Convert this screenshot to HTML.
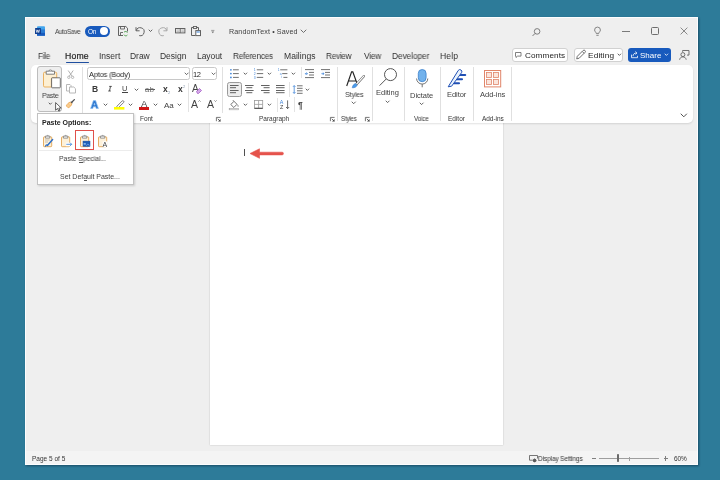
<!DOCTYPE html>
<html><head><meta charset="utf-8">
<style>
*{margin:0;padding:0;box-sizing:border-box}
html,body{width:720px;height:480px;overflow:hidden;background:#2d7b99;font-family:"Liberation Sans",sans-serif;color:#242424}
.a{position:absolute}
.t{position:absolute;white-space:nowrap;line-height:1;will-change:transform}
svg{position:absolute;overflow:visible}
</style></head><body>
<div class="a" style="left:24.70px;top:16.70px;width:673.50px;height:447.90px;background:#efefef;border:1px solid #fcfdfe;box-shadow:0.5px 0.5px 2px rgba(0,20,40,.45)"></div>
<svg style="left:35.00px;top:26.00px" width="10" height="10" viewBox="0 0 10 10" ><rect x="2" y="0.2" width="8" height="9.6" rx="1" fill="#41a5ee"/>
<rect x="2" y="3.4" width="8" height="3.2" fill="#2b7cd3"/><rect x="2" y="6.6" width="8" height="3.2" rx="0" fill="#185abd"/>
<rect x="0" y="2" width="6" height="6" rx="0.6" fill="#103f91"/>
<path d="M1 3.6l0.9 2.9 0.9-2.6 0.9 2.6 0.9-2.9" fill="none" stroke="#fff" stroke-width="0.7"/></svg>
<div class="t" style="left:54.88px;top:28px;font-size:7px;color:#424242;letter-spacing:-0.345px;transform:scaleX(0.9197);transform-origin:0 0">AutoSave</div>
<div class="a" style="left:84.50px;top:25.50px;width:25.50px;height:11.50px;background:#185abd;border-radius:6px"></div>
<div class="a" style="left:100.20px;top:27.30px;width:8.00px;height:8.00px;background:#fff;border-radius:50%"></div>
<div class="t" style="left:88.31px;top:29px;font-size:6.5px;color:#ffffff;letter-spacing:-0.374px;transform:scaleX(0.9529);transform-origin:0 0">On</div>
<svg style="left:118.00px;top:26.00px" width="10" height="10" viewBox="0 0 10 10" ><path d="M0.5 0.5h7.3l1.7 1.7v3.3M0.5 0.5v9h4.5" fill="none" stroke="#616161" stroke-width="1"/>
<path d="M2.5 0.5v2.5h4v-2.5M2.5 9.5v-3h2.5" fill="none" stroke="#616161" stroke-width="0.9"/>
<path d="M6 6.3a2 2 0 0 1 3.4 0.3M9.4 9a2 2 0 0 1-3.4-0.3" fill="none" stroke="#3f9b3f" stroke-width="0.9"/></svg>
<svg style="left:135.00px;top:26.00px" width="10" height="10" viewBox="0 0 10 10" ><path d="M1 1.2v3.6h3.6" fill="none" stroke="#616161" stroke-width="1"/><path d="M1.3 4.6A4 4 0 1 1 4.2 9.6" fill="none" stroke="#616161" stroke-width="1"/></svg>
<svg style="left:147.70px;top:29.45px" width="5" height="3.5" viewBox="0 0 5 3.5" ><path d="M1 1l1.50 1.50 1.50 -1.50" fill="none" stroke="#505050" stroke-width="0.9" stroke-linecap="round" stroke-linejoin="round"/></svg>
<svg style="left:157.80px;top:26.00px" width="10" height="10" viewBox="0 0 10 10" ><path d="M9 1.2v3.6h-3.6" fill="none" stroke="#a8a8a8" stroke-width="1"/><path d="M8.7 4.6A4 4 0 1 0 5.8 9.6" fill="none" stroke="#a8a8a8" stroke-width="1"/></svg>
<svg style="left:174.60px;top:28.40px" width="10.4" height="5.4" viewBox="0 0 10.4 5.4" ><rect x="0.5" y="0.5" width="9.4" height="4.4" fill="none" stroke="#616161" stroke-width="1"/><path d="M5.2 0.5v4.4" stroke="#616161" stroke-width="1"/><path d="M1.5 2h2.5M6.4 2h2.5M1.5 3.4h2.5M6.4 3.4h2.5" stroke="#999" stroke-width="0.6"/></svg>
<svg style="left:191.00px;top:26.00px" width="10" height="10" viewBox="0 0 10 10" ><path d="M2.6 1.5H0.5v8h4M5.4 1.5h2.1v2.5" fill="none" stroke="#616161" stroke-width="1"/><rect x="2.4" y="0.5" width="3.2" height="2" fill="none" stroke="#616161" stroke-width="0.9"/><rect x="4.8" y="4.6" width="4.7" height="5" fill="#fff" stroke="#616161" stroke-width="1"/><path d="M5.5 6h3.3" stroke="#3b82d8" stroke-width="1"/></svg>
<svg style="left:211.00px;top:30.00px" width="3.6" height="3.4" viewBox="0 0 3.6 3.4" ><path d="M0.2 0.4h3.2" stroke="#777" stroke-width="0.7"/><path d="M0.4 1.4h2.8L1.8 3.2z" fill="#777"/></svg>
<div class="t" style="left:229.41px;top:28px;font-size:7px;color:#424242;letter-spacing:0.088px;transform:scaleX(1.0232);transform-origin:0 0">RandomText • Saved</div>
<svg style="left:299.50px;top:29.25px" width="7" height="4.5" viewBox="0 0 7 4.5" ><path d="M1 1l2.50 2.50 2.50 -2.50" fill="none" stroke="#616161" stroke-width="0.9" stroke-linecap="round" stroke-linejoin="round"/></svg>
<svg style="left:531.50px;top:27.50px" width="8.5" height="8.5" viewBox="0 0 8.5 8.5" ><circle cx="5.1" cy="3.4" r="2.8" fill="none" stroke="#6a6a6a" stroke-width="0.85"/><path d="M3.1 5.4L0.6 7.9" stroke="#6a6a6a" stroke-width="0.95"/></svg>
<svg style="left:594.00px;top:27.00px" width="7" height="9.4" viewBox="0 0 7 9.4" ><path d="M2.2 6.4C2 5.1 0.6 4.5 0.6 3a2.9 2.9 0 0 1 5.8 0c0 1.5-1.4 2.1-1.6 3.4z" fill="none" stroke="#6a6a6a" stroke-width="0.8"/><path d="M2.3 8.3h2.4" stroke="#6a6a6a" stroke-width="0.8"/></svg>
<div class="a" style="left:622.00px;top:31.20px;width:8.00px;height:0.80px;background:#7a7a7a"></div>
<div class="a" style="left:651.20px;top:27.20px;width:7.60px;height:7.60px;border:0.9px solid #6e6e6e;border-radius:1.5px"></div>
<svg style="left:680.00px;top:27.00px" width="8" height="8" viewBox="0 0 8 8" ><path d="M0.6 0.6l6.8 6.8M7.4 0.6l-6.8 6.8" stroke="#6e6e6e" stroke-width="0.8"/></svg>
<div class="t" style="left:38.09px;top:52px;font-size:8.5px;color:#333333;letter-spacing:-0.235px;transform:scaleX(0.9441);transform-origin:0 0">File</div>
<div class="t" style="left:98.71px;top:52px;font-size:8.5px;color:#333333;letter-spacing:0.010px">Insert</div>
<div class="t" style="left:130.30px;top:52px;font-size:8.5px;color:#333333;letter-spacing:-0.028px">Draw</div>
<div class="t" style="left:160.30px;top:52px;font-size:8.5px;color:#333333;letter-spacing:-0.020px">Design</div>
<div class="t" style="left:196.81px;top:52px;font-size:8.5px;color:#333333;letter-spacing:-0.076px;transform:scaleX(0.9846);transform-origin:0 0">Layout</div>
<div class="t" style="left:233.08px;top:52px;font-size:8.5px;color:#333333;letter-spacing:-0.183px;transform:scaleX(0.9612);transform-origin:0 0">References</div>
<div class="t" style="left:283.79px;top:52px;font-size:8.5px;color:#333333;letter-spacing:0.023px;transform:scaleX(1.0054);transform-origin:0 0">Mailings</div>
<div class="t" style="left:326.33px;top:52px;font-size:8.5px;color:#333333;letter-spacing:-0.225px;transform:scaleX(0.9587);transform-origin:0 0">Review</div>
<div class="t" style="left:363.71px;top:52px;font-size:8.5px;color:#333333;letter-spacing:-0.170px;transform:scaleX(0.9721);transform-origin:0 0">View</div>
<div class="t" style="left:391.81px;top:52px;font-size:8.5px;color:#333333;letter-spacing:-0.089px;transform:scaleX(0.9812);transform-origin:0 0">Developer</div>
<div class="t" style="left:440.29px;top:52px;font-size:8.5px;color:#333333;letter-spacing:0.095px;transform:scaleX(1.0173);transform-origin:0 0">Help</div>
<div class="t" style="left:65.18px;top:52px;font-size:8.5px;color:#242424;letter-spacing:0.147px;transform:scaleX(1.0204);transform-origin:0 0;-webkit-text-stroke:0.2px #242424">Home</div>
<div class="a" style="left:66.00px;top:61.50px;width:22.50px;height:1.50px;background:#1f4fa0;border-radius:1px"></div>
<div class="a" style="left:512.30px;top:48.20px;width:55.40px;height:14.00px;background:#fff;border:1px solid #d1d1d1;border-radius:3px"></div>
<svg style="left:515.30px;top:52.00px" width="6.5" height="6" viewBox="0 0 6.5 6" ><path d="M0.5 0.5h5.5v3.6H2.6L1 5.5V4.1H0.5z" fill="none" stroke="#616161" stroke-width="0.8" stroke-linejoin="round"/></svg>
<div class="t" style="left:524.59px;top:52px;font-size:8px;color:#242424;letter-spacing:0.099px;transform:scaleX(1.0183);transform-origin:0 0">Comments</div>
<div class="a" style="left:573.50px;top:48.20px;width:49.20px;height:14.00px;background:#fff;border:1px solid #d1d1d1;border-radius:3px"></div>
<svg style="left:575.80px;top:50.20px" width="10" height="9.6" viewBox="0 0 10 9.6" ><path d="M0.7 8.9l0.6-2.6 5.8-5.8a1.3 1.3 0 0 1 1.9 1.9L3.2 8.2z M6.3 1.5l1.8 1.8" fill="none" stroke="#616161" stroke-width="0.9" stroke-linejoin="round"/></svg>
<div class="t" style="left:587.62px;top:52px;font-size:8px;color:#242424;letter-spacing:0.131px;transform:scaleX(1.0338);transform-origin:0 0">Editing</div>
<svg style="left:616.80px;top:53.30px" width="4.8" height="3.4" viewBox="0 0 4.8 3.4" ><path d="M1 1l1.40 1.40 1.40 -1.40" fill="none" stroke="#505050" stroke-width="0.9" stroke-linecap="round" stroke-linejoin="round"/></svg>
<div class="a" style="left:628.00px;top:48.20px;width:42.50px;height:13.80px;background:#185abd;border-radius:3px"></div>
<svg style="left:630.50px;top:51.00px" width="7" height="7.2" viewBox="0 0 7 7.2" ><path d="M0.5 3.6v3.1h6V4.8" fill="none" stroke="#fff" stroke-width="0.8"/><path d="M2 5.2c0-2.1 1.5-3.2 3.6-3.2M4.4 0.6l1.5 1.4-1.4 1.5" fill="none" stroke="#fff" stroke-width="0.8"/></svg>
<div class="t" style="left:639.94px;top:52px;font-size:8px;color:#ffffff;letter-spacing:0.007px">Share</div>
<svg style="left:664.10px;top:53.30px" width="4.8" height="3.4" viewBox="0 0 4.8 3.4" ><path d="M1 1l1.40 1.40 1.40 -1.40" fill="none" stroke="#ffffff" stroke-width="0.8" stroke-linecap="round" stroke-linejoin="round"/></svg>
<svg style="left:679.00px;top:50.00px" width="11" height="10.2" viewBox="0 0 11 10.2" ><circle cx="3.9" cy="4.6" r="2" fill="none" stroke="#616161" stroke-width="0.9"/><path d="M0.6 9.7c0.5-2 1.5-2.8 3.3-2.8s2.8 0.8 3.3 2.8" fill="none" stroke="#616161" stroke-width="0.9"/><path d="M3.6 1.8V0.5h6.4v4.6H8" fill="none" stroke="#616161" stroke-width="0.9"/></svg>
<div class="a" style="left:210.00px;top:120.00px;width:293.00px;height:325.00px;background:#fff;box-shadow:0 0 1.5px rgba(0,0,0,.22)"></div>
<div class="a" style="left:244.00px;top:149.00px;width:1.00px;height:7.00px;background:#505050"></div>
<svg style="left:248.50px;top:147.50px" width="36" height="11" viewBox="0 0 36 11" ><path d="M1 5.5L10.5 0.8v3.4h22.6a1.35 1.35 0 0 1 0 2.7H10.5v3.4z" fill="#e5534b" stroke="#e5534b" stroke-width="0.6" stroke-linejoin="round"/></svg>
<div class="a" style="left:30.50px;top:65.00px;width:662.50px;height:58.30px;background:#fff;border-radius:5px;box-shadow:0 1px 2px rgba(0,0,0,.12)"></div>
<div class="a" style="left:37.00px;top:66.30px;width:25.40px;height:45.90px;background:#efefef;border:1px solid #bdbdbd;border-radius:3px"></div>
<svg style="left:42.50px;top:69.50px" width="18" height="18.5" viewBox="0 0 18 18.5" ><path d="M3.2 2.2H1.8a1.3 1.3 0 0 0-1.3 1.3v12.2a1.3 1.3 0 0 0 1.3 1.3h6.6V9.2a1.3 1.3 0 0 1 1.3-1.3h4V3.5a1.3 1.3 0 0 0-1.3-1.3h-1.4" fill="#fdefd2" stroke="#e7a548" stroke-width="0.85"/>
<path d="M3.2 1.2h8.3v3h-8.3z" fill="#fff" stroke="#707070" stroke-width="0.9"/>
<path d="M5.5 1.2a1.9 1.5 0 0 1 3.7 0" fill="#fff" stroke="#707070" stroke-width="0.9"/>
<rect x="8.6" y="7.8" width="8.7" height="10" rx="0.6" fill="#fff" stroke="#5a5a5a" stroke-width="0.85"/></svg>
<div class="t" style="left:41.53px;top:92px;font-size:7.5px;color:#424242;letter-spacing:-0.341px;transform:scaleX(0.9252);transform-origin:0 0">Paste</div>
<svg style="left:47.50px;top:102.15px" width="4.6" height="3.3" viewBox="0 0 4.6 3.3" ><path d="M1 1l1.30 1.30 1.30 -1.30" fill="none" stroke="#505050" stroke-width="0.9" stroke-linecap="round" stroke-linejoin="round"/></svg>
<svg style="left:54.80px;top:101.80px" width="6.5" height="9.4" viewBox="0 0 6.5 9.4" ><path d="M0.6 0.6v7.6l1.9-1.7 1.3 2.6 1.2-0.6-1.2-2.5h2.4z" fill="#fff" stroke="#222" stroke-width="0.7" stroke-linejoin="round"/></svg>
<svg style="left:66.80px;top:69.70px" width="7.4" height="9" viewBox="0 0 7.4 9" ><path d="M1.2 0.5l4 5.8M6.2 0.5l-4 5.8" stroke="#a8a8a8" stroke-width="0.9" fill="none"/><circle cx="1.8" cy="7.3" r="1.2" fill="none" stroke="#a8a8a8" stroke-width="0.8"/><circle cx="5.6" cy="7.3" r="1.2" fill="none" stroke="#a8a8a8" stroke-width="0.8"/></svg>
<svg style="left:65.80px;top:84.30px" width="10" height="9.5" viewBox="0 0 10 9.5" ><path d="M0.5 0.5h3.5l1 1v5.5h-4.5z" fill="#fff" stroke="#b0b0b0" stroke-width="0.9"/><path d="M3.5 3h4.3l1.7 1.7v4.3h-6z" fill="#fff" stroke="#b0b0b0" stroke-width="0.9"/></svg>
<svg style="left:66.20px;top:99.40px" width="9" height="9" viewBox="0 0 9 9" ><path d="M6.2 2.8L8.4 0.6" stroke="#505050" stroke-width="1.3" stroke-linecap="round"/><path d="M5.2 2.2l1.6 1.6-0.9 0.9-1.6-1.6z" fill="#505050"/><path d="M4.1 3.2l1.7 1.7c-0.4 1.6-1.8 3.3-3.6 3.9L0.3 6.9C1 5.1 2.5 3.6 4.1 3.2z" fill="#fbd39a" stroke="#e89a3c" stroke-width="0.7" stroke-linejoin="round"/><path d="M1.8 6.6l1.6-1.6M2.8 7.5l1.4-1.4" stroke="#e89a3c" stroke-width="0.4"/></svg>
<div class="a" style="left:82.00px;top:67.00px;width:1.00px;height:46.00px;background:#e0e0e0"></div>
<div class="a" style="left:87.30px;top:67.10px;width:102.90px;height:13.40px;background:#fff;border:1px solid #c8c8c8;border-radius:2.5px"></div>
<div class="t" style="left:88.98px;top:71px;font-size:7.5px;color:#242424;letter-spacing:-0.095px;transform:scaleX(0.9756);transform-origin:0 0">Aptos (Body)</div>
<svg style="left:184.10px;top:72.00px" width="5.2" height="3.6" viewBox="0 0 5.2 3.6" ><path d="M1 1l1.60 1.60 1.60 -1.60" fill="none" stroke="#424242" stroke-width="0.8" stroke-linecap="round" stroke-linejoin="round"/></svg>
<div class="a" style="left:191.90px;top:67.10px;width:25.10px;height:13.40px;background:#fff;border:1px solid #c8c8c8;border-radius:2.5px"></div>
<div class="t" style="left:192.96px;top:71px;font-size:7.5px;color:#242424;letter-spacing:-0.326px;transform:scaleX(0.9559);transform-origin:0 0">12</div>
<svg style="left:211.20px;top:72.00px" width="5.2" height="3.6" viewBox="0 0 5.2 3.6" ><path d="M1 1l1.60 1.60 1.60 -1.60" fill="none" stroke="#424242" stroke-width="0.8" stroke-linecap="round" stroke-linejoin="round"/></svg>
<div class="t" style="left:91.83px;top:85px;font-size:8.5px;color:#3a3a3a;font-weight:bold">B</div>
<svg style="left:108.00px;top:86.30px" width="4" height="5.4" viewBox="0 0 4 5.4" ><path d="M1.2 0.4h2.6M0.2 5h2.6M2.5 0.4L1.5 5" fill="none" stroke="#424242" stroke-width="0.9"/></svg>
<div class="t" style="left:121.82px;top:85px;font-size:7.5px;color:#424242">U</div>
<div class="a" style="left:122.20px;top:92.00px;width:5.70px;height:0.80px;background:#424242"></div>
<svg style="left:134.10px;top:87.65px" width="5" height="3.5" viewBox="0 0 5 3.5" ><path d="M1 1l1.50 1.50 1.50 -1.50" fill="none" stroke="#505050" stroke-width="0.9" stroke-linecap="round" stroke-linejoin="round"/></svg>
<div class="t" style="left:145.48px;top:86px;font-size:7px;color:#616161;letter-spacing:0.580px;transform:scaleX(1.0807);transform-origin:0 0">ab</div>
<div class="a" style="left:145.00px;top:88.80px;width:10.00px;height:0.80px;background:#616161"></div>
<div class="t" style="left:162.94px;top:85px;font-size:8.5px;color:#333333;font-weight:bold">x</div>
<div class="t" style="left:168.20px;top:91px;font-size:4px;color:#8a9ab0">2</div>
<div class="t" style="left:177.94px;top:85px;font-size:8.5px;color:#333333;font-weight:bold">x</div>
<div class="t" style="left:183.20px;top:85px;font-size:4px;color:#8a9ab0">2</div>
<div class="a" style="left:188.00px;top:82.75px;width:1.00px;height:28.75px;background:#e3e3e3"></div>
<div class="t" style="left:192.47px;top:84px;font-size:10px;color:#424242">A</div>
<svg style="left:196.20px;top:88.00px" width="6" height="6" viewBox="0 0 6 6" ><path d="M0.5 3.5l3-3 2 2-3 3h-1z" fill="#d4a8e8" stroke="#a65cc8" stroke-width="0.8"/></svg>
<svg style="left:90.20px;top:99.80px" width="9" height="9" viewBox="0 0 9 9" ><path d="M0.6 8.5L3.4 0.5h2.2l2.8 8h-2.2l-0.55-1.7H3.35L2.8 8.5z M3.95 5h1.1L4.5 3.1z" fill="#2f78d0" stroke="#8cc0f0" stroke-width="0.7" fill-rule="evenodd" stroke-linejoin="round"/></svg>
<svg style="left:102.70px;top:102.55px" width="5" height="3.5" viewBox="0 0 5 3.5" ><path d="M1 1l1.50 1.50 1.50 -1.50" fill="none" stroke="#505050" stroke-width="0.9" stroke-linecap="round" stroke-linejoin="round"/></svg>
<svg style="left:114.40px;top:99.80px" width="10.6" height="9.6" viewBox="0 0 10.6 9.6" ><path d="M3 6.2L8.1 1a1 1 0 0 1 1.5 1.5L4.5 7.6l-2 0.5z" fill="#fff" stroke="#616161" stroke-width="0.8" stroke-linejoin="round"/><rect x="0" y="7" width="10.4" height="2.6" fill="#ffff00"/></svg>
<svg style="left:128.10px;top:102.55px" width="5" height="3.5" viewBox="0 0 5 3.5" ><path d="M1 1l1.50 1.50 1.50 -1.50" fill="none" stroke="#505050" stroke-width="0.9" stroke-linecap="round" stroke-linejoin="round"/></svg>
<div class="t" style="left:140.58px;top:99px;font-size:9.5px;color:#424242">A</div>
<div class="a" style="left:138.70px;top:107.20px;width:10.40px;height:2.60px;background:#d01818"></div>
<svg style="left:152.50px;top:102.55px" width="5" height="3.5" viewBox="0 0 5 3.5" ><path d="M1 1l1.50 1.50 1.50 -1.50" fill="none" stroke="#505050" stroke-width="0.9" stroke-linecap="round" stroke-linejoin="round"/></svg>
<div class="t" style="left:163.98px;top:102px;font-size:8px;color:#424242">Aa</div>
<svg style="left:176.50px;top:102.55px" width="5" height="3.5" viewBox="0 0 5 3.5" ><path d="M1 1l1.50 1.50 1.50 -1.50" fill="none" stroke="#505050" stroke-width="0.9" stroke-linecap="round" stroke-linejoin="round"/></svg>
<div class="t" style="left:190.97px;top:99px;font-size:10.5px;color:#424242">A</div>
<svg style="left:198.20px;top:99.60px" width="3" height="2" viewBox="0 0 3 2" ><path d="M0.4 1.6l1.1-1.1 1.1 1.1" fill="none" stroke="#616161" stroke-width="0.7"/></svg>
<div class="t" style="left:206.87px;top:99px;font-size:10.5px;color:#424242">A</div>
<svg style="left:214.00px;top:99.60px" width="3" height="2" viewBox="0 0 3 2" ><path d="M0.4 0.4l1.1 1.1 1.1-1.1" fill="none" stroke="#616161" stroke-width="0.7"/></svg>
<div class="t" style="left:140.47px;top:116px;font-size:6.5px;color:#363636;letter-spacing:-0.070px;transform:scaleX(0.9831);transform-origin:0 0">Font</div>
<svg style="left:215.50px;top:116.50px" width="4.6" height="4.4" viewBox="0 0 4.6 4.4" ><path d="M0.4 4.2V0.4h4.2" fill="none" stroke="#555" stroke-width="0.8"/><path d="M1.8 1.8l2.4 2.4" stroke="#444" stroke-width="0.8"/><path d="M4.6 2v2.6H2z" fill="#444"/></svg>
<div class="a" style="left:222.00px;top:67.00px;width:1.00px;height:46.00px;background:#e0e0e0"></div>
<svg style="left:229.75px;top:69.20px" width="9.6" height="9" viewBox="0 0 9.6 9" ><circle cx="0.9" cy="0.80" r="0.85" fill="#3b82d8"/><path d="M3 0.80h5.8" stroke="#616161" stroke-width="0.9"/><circle cx="0.9" cy="4.60" r="0.85" fill="#3b82d8"/><path d="M3 4.60h5.8" stroke="#616161" stroke-width="0.9"/><circle cx="0.9" cy="8.40" r="0.85" fill="#3b82d8"/><path d="M3 8.40h5.8" stroke="#616161" stroke-width="0.9"/></svg>
<svg style="left:243.20px;top:72.10px" width="4.8" height="3.4" viewBox="0 0 4.8 3.4" ><path d="M1 1l1.40 1.40 1.40 -1.40" fill="none" stroke="#505050" stroke-width="0.9" stroke-linecap="round" stroke-linejoin="round"/></svg>
<svg style="left:253.90px;top:69.20px" width="9.6" height="9" viewBox="0 0 9.6 9" ><text x="-0.2" y="2.00" font-size="3.4" fill="#3b82d8" font-family="Liberation Sans">1</text><path d="M2.8 0.80h6.4" stroke="#616161" stroke-width="0.9"/><text x="-0.2" y="5.80" font-size="3.4" fill="#3b82d8" font-family="Liberation Sans">2</text><path d="M2.8 4.60h6.4" stroke="#616161" stroke-width="0.9"/><text x="-0.2" y="9.60" font-size="3.4" fill="#3b82d8" font-family="Liberation Sans">3</text><path d="M2.8 8.40h6.4" stroke="#616161" stroke-width="0.9"/></svg>
<svg style="left:267.40px;top:72.10px" width="4.8" height="3.4" viewBox="0 0 4.8 3.4" ><path d="M1 1l1.40 1.40 1.40 -1.40" fill="none" stroke="#505050" stroke-width="0.9" stroke-linecap="round" stroke-linejoin="round"/></svg>
<svg style="left:278.00px;top:69.20px" width="9.6" height="9" viewBox="0 0 9.6 9" ><text x="-0.20" y="1.90" font-size="3.2" fill="#3b82d8" font-family="Liberation Sans">1</text><path d="M2.20 0.80h7.20" stroke="#616161" stroke-width="0.9"/><text x="1.80" y="5.70" font-size="3.2" fill="#3b82d8" font-family="Liberation Sans">a</text><path d="M4.20 4.60h5.20" stroke="#616161" stroke-width="0.9"/><text x="3.00" y="9.50" font-size="3.2" fill="#3b82d8" font-family="Liberation Sans">i</text><path d="M5.40 8.40h4.00" stroke="#616161" stroke-width="0.9"/></svg>
<svg style="left:291.10px;top:72.10px" width="4.8" height="3.4" viewBox="0 0 4.8 3.4" ><path d="M1 1l1.40 1.40 1.40 -1.40" fill="none" stroke="#505050" stroke-width="0.9" stroke-linecap="round" stroke-linejoin="round"/></svg>
<div class="a" style="left:301.00px;top:66.50px;width:1.00px;height:11.50px;background:#e3e3e3"></div>
<svg style="left:305.00px;top:69.20px" width="9" height="9" viewBox="0 0 9 9" ><path d="M0 0.6h9M4 3.4h5M4 6h5M0 8.6h9" stroke="#616161" stroke-width="0.9"/><path d="M3 4.7H0.4M1.6 3.5L0.4 4.7l1.2 1.2" fill="none" stroke="#3b82d8" stroke-width="0.8"/></svg>
<svg style="left:320.50px;top:69.20px" width="9" height="9" viewBox="0 0 9 9" ><path d="M0 0.6h9M4 3.4h5M4 6h5M0 8.6h9" stroke="#616161" stroke-width="0.9"/><path d="M0.4 4.7H3M1.8 3.5L3 4.7 1.8 5.9" fill="none" stroke="#3b82d8" stroke-width="0.8"/></svg>
<div class="a" style="left:227.20px;top:82.30px;width:14.50px;height:14.30px;background:#ededed;border:1px solid #9a9a9a;border-radius:2.5px"></div>
<svg style="left:230.00px;top:84.80px" width="9" height="8.5" viewBox="0 0 9 8.5" ><path d="M0.00 0.50h8.60" stroke="#505050" stroke-width="0.9"/><path d="M0.00 2.70h6.00" stroke="#505050" stroke-width="0.9"/><path d="M0.00 5.50h8.60" stroke="#505050" stroke-width="0.9"/><path d="M0.00 7.70h6.00" stroke="#505050" stroke-width="0.9"/></svg>
<svg style="left:245.10px;top:84.80px" width="9" height="8.5" viewBox="0 0 9 8.5" ><path d="M0.00 0.50h8.60" stroke="#505050" stroke-width="0.9"/><path d="M1.30 2.70h6.00" stroke="#505050" stroke-width="0.9"/><path d="M0.00 5.50h8.60" stroke="#505050" stroke-width="0.9"/><path d="M1.30 7.70h6.00" stroke="#505050" stroke-width="0.9"/></svg>
<svg style="left:260.60px;top:84.80px" width="9" height="8.5" viewBox="0 0 9 8.5" ><path d="M0.00 0.50h8.60" stroke="#505050" stroke-width="0.9"/><path d="M2.60 2.70h6.00" stroke="#505050" stroke-width="0.9"/><path d="M0.00 5.50h8.60" stroke="#505050" stroke-width="0.9"/><path d="M2.60 7.70h6.00" stroke="#505050" stroke-width="0.9"/></svg>
<svg style="left:276.00px;top:84.80px" width="9" height="8.5" viewBox="0 0 9 8.5" ><path d="M0.00 0.50h8.60" stroke="#505050" stroke-width="0.9"/><path d="M0.00 2.70h8.60" stroke="#505050" stroke-width="0.9"/><path d="M0.00 5.50h8.60" stroke="#505050" stroke-width="0.9"/><path d="M0.00 7.70h8.60" stroke="#505050" stroke-width="0.9"/></svg>
<div class="a" style="left:289.00px;top:82.00px;width:1.00px;height:14.50px;background:#e3e3e3"></div>
<svg style="left:292.60px;top:84.60px" width="9.6" height="9" viewBox="0 0 9.6 9" ><path d="M1.2 0.6v7.8M0 1.8l1.2-1.2 1.2 1.2M0 7.2l1.2 1.2 1.2-1.2" fill="none" stroke="#3b82d8" stroke-width="0.8"/><path d="M4 0.8h5.6M4 3.3h5.6M4 5.8h5.6M4 8.3h5.6" stroke="#616161" stroke-width="0.9"/></svg>
<svg style="left:304.90px;top:87.50px" width="4.8" height="3.4" viewBox="0 0 4.8 3.4" ><path d="M1 1l1.40 1.40 1.40 -1.40" fill="none" stroke="#505050" stroke-width="0.9" stroke-linecap="round" stroke-linejoin="round"/></svg>
<svg style="left:229.25px;top:99.60px" width="9.8" height="10" viewBox="0 0 9.8 10" ><path d="M1.8 4.5L5 1.3l3 3-3.2 3.2z" fill="#fff" stroke="#616161" stroke-width="0.9" stroke-linejoin="round"/><path d="M5 1.3L3.9 0.2" stroke="#616161" stroke-width="0.9"/><path d="M8.5 4.8c0.6 0.8 0.9 1.4 0.5 1.9" fill="none" stroke="#616161" stroke-width="0.8"/><rect x="0.2" y="8.4" width="9.4" height="1.4" fill="#fff" stroke="#9a9a9a" stroke-width="0.6"/></svg>
<svg style="left:243.20px;top:102.90px" width="4.8" height="3.4" viewBox="0 0 4.8 3.4" ><path d="M1 1l1.40 1.40 1.40 -1.40" fill="none" stroke="#505050" stroke-width="0.9" stroke-linecap="round" stroke-linejoin="round"/></svg>
<svg style="left:253.90px;top:100.00px" width="9.2" height="8.8" viewBox="0 0 9.2 8.8" ><rect x="0.5" y="0.5" width="8.2" height="7.8" fill="none" stroke="#9a9a9a" stroke-width="0.8"/><path d="M4.6 0.5v7.8M0.5 4.4h8.2" stroke="#9a9a9a" stroke-width="0.8"/><path d="M0.5 8.3h8.2" stroke="#424242" stroke-width="1"/></svg>
<svg style="left:267.40px;top:102.90px" width="4.8" height="3.4" viewBox="0 0 4.8 3.4" ><path d="M1 1l1.40 1.40 1.40 -1.40" fill="none" stroke="#505050" stroke-width="0.9" stroke-linecap="round" stroke-linejoin="round"/></svg>
<div class="a" style="left:276.75px;top:97.75px;width:1.00px;height:13.75px;background:#e3e3e3"></div>
<svg style="left:279.75px;top:100.20px" width="10" height="9" viewBox="0 0 10 9" ><text x="-0.2" y="4.1" font-size="5.4" fill="#3b82d8" font-family="Liberation Sans">A</text><text x="-0.1" y="9" font-size="5.4" fill="#424242" font-family="Liberation Sans">Z</text><path d="M7.6 0.4v8.2M6 7l1.6 1.6L9.2 7" fill="none" stroke="#424242" stroke-width="0.8"/></svg>
<div class="a" style="left:294.00px;top:96.50px;width:1.00px;height:15.00px;background:#e3e3e3"></div>
<div class="t" style="left:298.20px;top:101px;font-size:8.5px;color:#424242;font-weight:bold">¶</div>
<div class="t" style="left:259.22px;top:116px;font-size:6.5px;color:#363636;letter-spacing:-0.015px">Paragraph</div>
<svg style="left:330.00px;top:116.50px" width="4.6" height="4.4" viewBox="0 0 4.6 4.4" ><path d="M0.4 4.2V0.4h4.2" fill="none" stroke="#555" stroke-width="0.8"/><path d="M1.8 1.8l2.4 2.4" stroke="#444" stroke-width="0.8"/><path d="M4.6 2v2.6H2z" fill="#444"/></svg>
<div class="a" style="left:337.00px;top:67.00px;width:1.00px;height:53.50px;background:#e0e0e0"></div>
<svg style="left:345.50px;top:70.50px" width="19" height="17.5" viewBox="0 0 19 17.5" ><path d="M0.7 15L5.6 0.9h1.2L11.3 13.3M2.5 10h7" fill="none" stroke="#242424" stroke-width="1.15"/><path d="M17.8 5.2L10.5 13.2" stroke="#616161" stroke-width="2.4" stroke-linecap="round"/><path d="M17.8 5.2L10.5 13.2" stroke="#fff" stroke-width="1.2" stroke-linecap="round"/><path d="M6.2 16.8c0.3-2 1.3-3.8 3.4-4.3l1.6 1.5c-0.6 2.2-2.6 2.8-5 2.8z" fill="#4a9ae8" stroke="#3276c8" stroke-width="0.5"/></svg>
<div class="t" style="left:344.78px;top:91px;font-size:7.5px;color:#424242;letter-spacing:-0.171px;transform:scaleX(0.9570);transform-origin:0 0">Styles</div>
<svg style="left:351.30px;top:100.95px" width="5.4" height="3.7" viewBox="0 0 5.4 3.7" ><path d="M1 1l1.70 1.70 1.70 -1.70" fill="none" stroke="#505050" stroke-width="0.9" stroke-linecap="round" stroke-linejoin="round"/></svg>
<div class="t" style="left:341.12px;top:116px;font-size:6.5px;color:#363636;letter-spacing:-0.188px;transform:scaleX(0.9453);transform-origin:0 0">Styles</div>
<svg style="left:364.50px;top:116.50px" width="4.6" height="4.4" viewBox="0 0 4.6 4.4" ><path d="M0.4 4.2V0.4h4.2" fill="none" stroke="#555" stroke-width="0.8"/><path d="M1.8 1.8l2.4 2.4" stroke="#444" stroke-width="0.8"/><path d="M4.6 2v2.6H2z" fill="#444"/></svg>
<div class="a" style="left:372.00px;top:67.00px;width:1.00px;height:53.50px;background:#e0e0e0"></div>
<svg style="left:378.50px;top:68.00px" width="19" height="19" viewBox="0 0 19 19" ><circle cx="11.5" cy="6.6" r="6" fill="#fff" stroke="#424242" stroke-width="0.9"/><path d="M7.3 10.9L0.6 17.6" stroke="#424242" stroke-width="0.9"/></svg>
<div class="t" style="left:376.28px;top:89px;font-size:7.5px;color:#424242;letter-spacing:-0.020px;transform:scaleX(0.9944);transform-origin:0 0">Editing</div>
<svg style="left:385.20px;top:100.00px" width="5.2" height="3.6" viewBox="0 0 5.2 3.6" ><path d="M1 1l1.60 1.60 1.60 -1.60" fill="none" stroke="#505050" stroke-width="0.9" stroke-linecap="round" stroke-linejoin="round"/></svg>
<div class="a" style="left:404.00px;top:67.00px;width:1.00px;height:53.50px;background:#e0e0e0"></div>
<svg style="left:415.80px;top:69.00px" width="12.4" height="18.6" viewBox="0 0 12.4 18.6" ><rect x="2.3" y="0.5" width="7.8" height="12.2" rx="3.9" fill="#72b2ec" stroke="#3a80cc" stroke-width="0.8"/><path d="M0.6 9.5a5.6 5.6 0 0 0 11.2 0M6.2 15.1v3.2" fill="none" stroke="#616161" stroke-width="0.9"/></svg>
<div class="t" style="left:409.98px;top:92px;font-size:7.5px;color:#424242;letter-spacing:-0.021px;transform:scaleX(0.9943);transform-origin:0 0">Dictate</div>
<svg style="left:419.00px;top:102.40px" width="5.2" height="3.6" viewBox="0 0 5.2 3.6" ><path d="M1 1l1.60 1.60 1.60 -1.60" fill="none" stroke="#505050" stroke-width="0.9" stroke-linecap="round" stroke-linejoin="round"/></svg>
<div class="t" style="left:414.37px;top:116px;font-size:6.5px;color:#363636;letter-spacing:-0.157px;transform:scaleX(0.9596);transform-origin:0 0">Voice</div>
<div class="a" style="left:440.00px;top:67.00px;width:1.00px;height:53.50px;background:#e0e0e0"></div>
<svg style="left:445.00px;top:66.00px" width="22" height="22" viewBox="0 0 22 22" ><path d="M14.2 9h6M11.6 13.25h5.4M9 17.25h5" stroke="#1f4fb4" stroke-width="2.1" stroke-linecap="round"/><path d="M3.2 20.8L13.2 4.5a2 2 0 0 1 3.4 2.1L6.6 20.2z" fill="#eaf3fd" stroke="#1f4fb4" stroke-width="1" stroke-linejoin="round"/></svg>
<div class="t" style="left:447.29px;top:91px;font-size:7.5px;color:#424242;letter-spacing:-0.052px;transform:scaleX(0.9863);transform-origin:0 0">Editor</div>
<div class="t" style="left:447.97px;top:116px;font-size:6.5px;color:#363636;letter-spacing:-0.010px">Editor</div>
<div class="a" style="left:473.00px;top:67.00px;width:1.00px;height:53.50px;background:#e0e0e0"></div>
<svg style="left:484.00px;top:69.50px" width="17.2" height="17.4" viewBox="0 0 17.2 17.4" ><rect x="0.5" y="0.5" width="16.2" height="16.4" fill="#fff" stroke="#e0866a" stroke-width="1"/><rect x="2.6" y="2.6" width="5" height="5" fill="#fbe5dc" stroke="#e0866a" stroke-width="0.8"/><rect x="9.6" y="2.6" width="5" height="5" fill="#fbe5dc" stroke="#e0866a" stroke-width="0.8"/><rect x="2.6" y="9.6" width="5" height="5" fill="#fbe5dc" stroke="#e0866a" stroke-width="0.8"/><rect x="9.6" y="9.6" width="5" height="5" fill="#fbe5dc" stroke="#e0866a" stroke-width="0.8"/></svg>
<div class="t" style="left:479.98px;top:91px;font-size:7.5px;color:#424242;letter-spacing:-0.012px">Add-ins</div>
<div class="t" style="left:481.58px;top:116px;font-size:6.5px;color:#363636;letter-spacing:-0.041px;transform:scaleX(0.9887);transform-origin:0 0">Add-ins</div>
<div class="a" style="left:511.00px;top:67.00px;width:1.00px;height:53.50px;background:#e0e0e0"></div>
<svg style="left:680.40px;top:113.00px" width="7.6" height="4.8" viewBox="0 0 7.6 4.8" ><path d="M1 1l2.80 2.80 2.80 -2.80" fill="none" stroke="#505050" stroke-width="1" stroke-linecap="round" stroke-linejoin="round"/></svg>
<div class="a" style="left:37.40px;top:112.50px;width:96.20px;height:72.70px;background:#fff;border:1px solid #c2c2c2;box-shadow:1px 1px 2px rgba(0,0,0,.15)"></div>
<div class="t" style="left:41.53px;top:119px;font-size:7px;color:#242424;letter-spacing:-0.010px;font-weight:bold">Paste Options:</div>
<div class="a" style="left:75.30px;top:130.20px;width:18.40px;height:20.30px;border:1.6px solid #e0504a"></div>
<svg style="left:43.00px;top:135.00px" width="12" height="12" viewBox="0 0 12 12" ><path d="M2.4 1.8H1.3a0.8 0.8 0 0 0-0.8 0.8v8.3a0.8 0.8 0 0 0 0.8 0.8h6.6a0.8 0.8 0 0 0 0.8-0.8V2.6a0.8 0.8 0 0 0-0.8-0.8H6.8" fill="#fdf1da" stroke="#e2a04a" stroke-width="0.85"/><path d="M2.4 1.1h4.4v2H2.4z" fill="#fff" stroke="#6a6a6a" stroke-width="0.7" stroke-linejoin="round"/><path d="M3.7 1.1a0.9 0.7 0 0 1 1.8 0" fill="#fff" stroke="#6a6a6a" stroke-width="0.6"/><path d="M2 5h4.5M2 7h3" stroke="#9a9a9a" stroke-width="0.6"/><path d="M4.4 10.4L9.6 4.6" stroke="#2c6fc8" stroke-width="1.5" stroke-linecap="round"/><path d="M2.2 11.6c0.3-1.2 1-1.9 2.2-2" fill="none" stroke="#2c6fc8" stroke-width="1.1"/></svg>
<svg style="left:61.00px;top:135.00px" width="12" height="12" viewBox="0 0 12 12" ><path d="M2.4 1.8H1.3a0.8 0.8 0 0 0-0.8 0.8v8.3a0.8 0.8 0 0 0 0.8 0.8h6.6a0.8 0.8 0 0 0 0.8-0.8V2.6a0.8 0.8 0 0 0-0.8-0.8H6.8" fill="#fdf1da" stroke="#e2a04a" stroke-width="0.85"/><path d="M2.4 1.1h4.4v2H2.4z" fill="#fff" stroke="#6a6a6a" stroke-width="0.7" stroke-linejoin="round"/><path d="M3.7 1.1a0.9 0.7 0 0 1 1.8 0" fill="#fff" stroke="#6a6a6a" stroke-width="0.6"/><rect x="4.8" y="7.6" width="6.4" height="3.6" fill="#fff" stroke="none"/><path d="M5.3 9.3h5.4M9.1 7.7l1.6 1.6-1.6 1.6" fill="none" stroke="#3b82d8" stroke-width="0.85"/></svg>
<svg style="left:80.20px;top:135.00px" width="12" height="12" viewBox="0 0 12 12" ><path d="M2.4 1.8H1.3a0.8 0.8 0 0 0-0.8 0.8v8.3a0.8 0.8 0 0 0 0.8 0.8h6.6a0.8 0.8 0 0 0 0.8-0.8V2.6a0.8 0.8 0 0 0-0.8-0.8H6.8" fill="#fdf1da" stroke="#e2a04a" stroke-width="0.85"/><path d="M2.4 1.1h4.4v2H2.4z" fill="#fff" stroke="#6a6a6a" stroke-width="0.7" stroke-linejoin="round"/><path d="M3.7 1.1a0.9 0.7 0 0 1 1.8 0" fill="#fff" stroke="#6a6a6a" stroke-width="0.6"/><rect x="3" y="6.1" width="7" height="5.3" fill="#1f5fb8" stroke="#1d4f9c" stroke-width="0.5"/><path d="M3.6 8.2h2.2v1.4H3.6z" fill="#9ccaf5"/><path d="M6.2 10.6l1.6-1.4 1.8 1.2" fill="none" stroke="#9ccaf5" stroke-width="0.6"/></svg>
<svg style="left:98.40px;top:135.00px" width="12" height="12" viewBox="0 0 12 12" ><path d="M2.4 1.8H1.3a0.8 0.8 0 0 0-0.8 0.8v8.3a0.8 0.8 0 0 0 0.8 0.8h6.6a0.8 0.8 0 0 0 0.8-0.8V2.6a0.8 0.8 0 0 0-0.8-0.8H6.8" fill="#fdf1da" stroke="#e2a04a" stroke-width="0.85"/><path d="M2.4 1.1h4.4v2H2.4z" fill="#fff" stroke="#6a6a6a" stroke-width="0.7" stroke-linejoin="round"/><path d="M3.7 1.1a0.9 0.7 0 0 1 1.8 0" fill="#fff" stroke="#6a6a6a" stroke-width="0.6"/><rect x="4.6" y="6.4" width="5" height="5.6" fill="#fff"/><text x="4.5" y="11.8" font-size="7" fill="#424242" font-family="Liberation Sans">A</text></svg>
<div class="a" style="left:39.00px;top:150.00px;width:93.00px;height:0.80px;background:#ececec"></div>
<div class="t" style="left:59.43px;top:155px;font-size:7px;color:#424242;letter-spacing:-0.048px;transform:scaleX(0.9849);transform-origin:0 0">Paste Special...</div>
<div class="a" style="left:78.80px;top:162.00px;width:3.90px;height:0.80px;background:#555"></div>
<div class="t" style="left:59.69px;top:173px;font-size:7px;color:#424242;letter-spacing:-0.023px;transform:scaleX(0.9927);transform-origin:0 0">Set Default Paste...</div>
<div class="a" style="left:83.60px;top:179.60px;width:3.40px;height:0.80px;background:#555"></div>
<div class="a" style="left:25.70px;top:450.80px;width:671.50px;height:12.80px;background:#f4f4f4"></div>
<div class="t" style="left:31.96px;top:456px;font-size:6.5px;color:#333333;letter-spacing:0.002px">Page 5 of 5</div>
<svg style="left:528.80px;top:454.60px" width="9" height="7" viewBox="0 0 9 7" ><path d="M3.6 5.2H0.5V0.5h8v3" fill="none" stroke="#555" stroke-width="0.8"/><circle cx="5.6" cy="5.4" r="1.6" fill="#555"/><circle cx="5.6" cy="5.4" r="0.6" fill="#f4f4f4"/><path d="M5.6 3.3v4.2M3.5 5.4h4.2M4.1 3.9l3 3M7.1 3.9l-3 3" stroke="#555" stroke-width="0.6"/></svg>
<div class="t" style="left:538.47px;top:456px;font-size:6.5px;color:#333333;letter-spacing:-0.062px;transform:scaleX(0.9797);transform-origin:0 0">Display Settings</div>
<div class="a" style="left:591.70px;top:458.00px;width:4.30px;height:1.00px;background:#808080"></div>
<div class="a" style="left:598.60px;top:458.00px;width:60.40px;height:1.00px;background:#9e9e9e"></div>
<div class="a" style="left:616.50px;top:454.00px;width:2.70px;height:8.00px;background:#6a6a6a;border-radius:0.8px"></div>
<div class="a" style="left:629.00px;top:456.50px;width:1.00px;height:4.00px;background:#9e9e9e"></div>
<div class="a" style="left:663.80px;top:458.00px;width:4.00px;height:1.00px;background:#808080"></div>
<div class="a" style="left:665.30px;top:456.00px;width:1.00px;height:5.00px;background:#808080"></div>
<div class="t" style="left:673.68px;top:456px;font-size:6.5px;color:#333333;letter-spacing:-0.113px;transform:scaleX(0.9819);transform-origin:0 0">60%</div>
</body></html>
